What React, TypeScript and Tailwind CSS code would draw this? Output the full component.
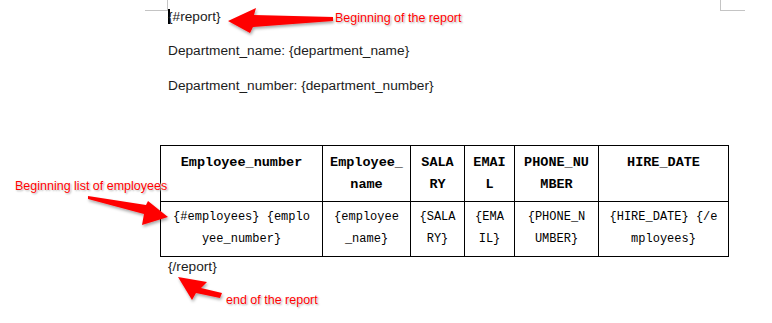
import React from 'react';

const heads = [
  ['Employee_number'],
  ['Employee_', 'name'],
  ['SALA', 'RY'],
  ['EMAI', 'L'],
  ['PHONE_NU', 'MBER'],
  ['HIRE_DATE'],
];

const cells = [
  ['{#employees} {emplo', 'yee_number}'],
  ['{employee', '_name}'],
  ['{SALA', 'RY}'],
  ['{EMA', 'IL}'],
  ['{PHONE_N', 'UMBER}'],
  ['{HIRE_DATE} {/e', 'mployees}'],
];

const note =
  "absolute text-[12.5px] leading-[14px] text-[#ff0000] font-['Liberation_Sans',Arial,sans-serif] whitespace-nowrap [text-shadow:0_0_2px_#fff,0_0_2px_#fff,1px_1px_2px_#9a9a9a]";

const App = () => {
  return (
    <div className="relative w-[772px] h-[323px] bg-white overflow-hidden">
      {/* page corner marks */}
      <div className="flex h-[10px]">
        <div className="ml-[145px] w-[23px] h-[11px] border-r border-b border-[#c4c4c4]" />
        <div className="ml-[552px] w-[25px] h-[11px] border-l border-b border-[#c4c4c4]" />
      </div>

      {/* document body */}
      <div className="font-['Liberation_Sans',Arial,sans-serif] text-[13.7px] leading-[16px] text-[#1c1c1c]">
        <div className="ml-[168px] -mt-px">
          <span className="inline-block align-[-3px] w-[2px] h-[15px] bg-black -mr-[2px]" />
          {'{#report}'}
        </div>
        <div className="ml-[168px] mt-[18px]">Department_name: {'{department_name}'}</div>
        <div className="ml-[168px] mt-[19px]">Department_number: {'{department_number}'}</div>
      </div>

      {/* template table */}
      <div className="ml-[160px] mt-[51px] w-[569px] grid grid-cols-[162px_88px_54px_50px_84px_130px] border-l border-t border-black font-['Liberation_Mono',monospace] text-black">
        {heads.map((h, i) => (
          <div
            key={'h' + i}
            className="h-[56px] border-r border-b border-black pt-[6px] text-center text-[13.5px] leading-[22px] font-bold whitespace-pre"
          >
            {h.map((l, j) => (
              <div key={j}>{l}</div>
            ))}
          </div>
        ))}
        {cells.map((c, i) => (
          <div
            key={'c' + i}
            className="h-[55px] border-r border-b border-black pt-[4px] text-center text-[12px] leading-[22px] whitespace-pre"
          >
            {c.map((l, j) => (
              <div key={j}>{l}</div>
            ))}
          </div>
        ))}
      </div>

      <div className="ml-[168px] mt-[2px] font-['Liberation_Sans',Arial,sans-serif] text-[13.7px] leading-[16px] text-[#1c1c1c]">
        {'{/report}'}
      </div>

      {/* annotations */}
      <svg className="absolute inset-0 pointer-events-none" width="772" height="323">
        <defs>
          <filter id="sh" x="-20%" y="-20%" width="140%" height="160%">
            <feDropShadow dx="1" dy="2" stdDeviation="1.5" floodColor="#000" floodOpacity="0.35" />
          </filter>
        </defs>
        <g fill="#ff0000" filter="url(#sh)">
          <polygon points="228,21 256,8 254,15 333,17 333,21 253,27 250,33" />
          <polygon points="88,196 146,205 148,201 168,217 142,225 144,214 88,199" />
          <polygon points="178,277 207,282 201,288 222,293 220,298 196,293 192,300" />
        </g>
      </svg>
      <div className={note + ' left-[335px] top-[11px]'}>Beginning of the report</div>
      <div className={note + ' left-[15px] top-[179px]'}>Beginning list of employees</div>
      <div className={note + ' left-[226px] top-[293px]'}>end of the report</div>
    </div>
  );
};

export default App;
